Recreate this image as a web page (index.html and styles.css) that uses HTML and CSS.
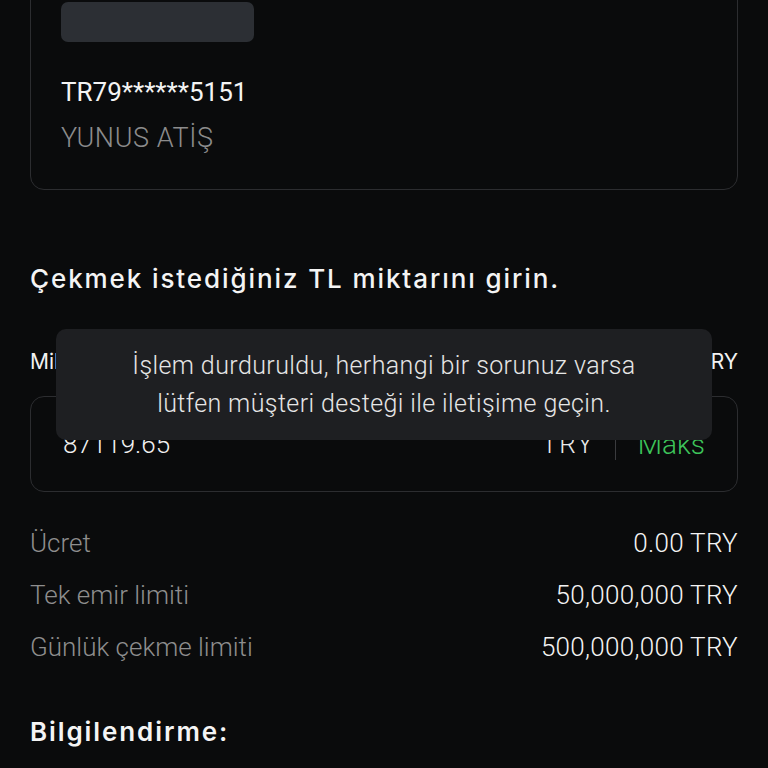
FILE: index.html
```html
<!DOCTYPE html>
<html lang="tr">
<head>
  <meta charset="UTF-8" />
  <meta name="viewport" content="width=device-width, initial-scale=1" />
  <title>TL Çekme</title>
  <link rel="stylesheet" href="styles.css">
</head>
<body>
  <div class="page">
    <div class="bank-card">
      <div class="bank-logo"></div>
      <div class="iban">TR79******5151</div>
      <div class="holder">YUNUS ATİŞ</div>
    </div>

    <h2 class="section-title">Çekmek istediğiniz TL miktarını girin.</h2>

    <div class="amount-head">
      <span class="amount-label">Miktar</span>
      <span class="amount-avail">TRY</span>
    </div>

    <div class="amount-box">
      <span class="amount-value">87119.65</span>
      <span class="amount-unit">TRY</span>
      <span class="divider"></span>
      <span class="max-btn">Maks</span>
    </div>

    <div class="info-rows">
      <div class="info-row"><span class="info-label">Ücret</span><span class="info-value">0.00 TRY</span></div>
      <div class="info-row"><span class="info-label">Tek emir limiti</span><span class="info-value">50,000,000 TRY</span></div>
      <div class="info-row"><span class="info-label">Günlük çekme limiti</span><span class="info-value">500,000,000 TRY</span></div>
    </div>

    <h3 class="notice-title">Bilgilendirme:</h3>
  </div>

  <div class="toast">
    İşlem durduruldu, herhangi bir sorunuz varsa<br>
    lütfen müşteri desteği ile iletişime geçin.
  </div>
</body>
</html>
```

FILE: styles.css
```css
body {
  position: relative;
  margin: 0;
  background-color: #0a0b0c;
  color: #f2f2f2;
  font-family: Roboto, 'Noto Sans', sans-serif;
  overflow: hidden;
}

.page {
  display: flow-root;
  padding: 0 30px;
}

.bank-card {
  margin-top: -20px;
  border: 1px solid #2c2d30;
  border-radius: 14px;
  padding: 21px 30px 34px;
}
.bank-logo {
  width: 193px;
  height: 40px;
  background-color: #2c2f34;
  border-radius: 7px;
}
.iban {
  margin-top: 33px;
  font-size: 26px;
  line-height: 34px;
  color: #f4f4f4;
}
.holder {
  margin-top: 12px;
  font-size: 27px;
  line-height: 34px;
  font-weight: 300;
  letter-spacing: 0.6px;
  color: #8c8c8c;
}

.section-title {
  margin: 72px 0 0;
  font-family: Inter, sans-serif;
  font-size: 26px;
  font-weight: 500;
  letter-spacing: 1.9px;
  line-height: 34px;
  color: #f4f4f4;
}

.amount-head {
  display: flex;
  justify-content: space-between;
  margin-top: 51px;
  font-family: Inter, sans-serif;
  font-size: 21px;
  line-height: 30px;
}

.amount-box {
  display: flex;
  align-items: center;
  height: 94px;
  margin-top: 19px;
  padding: 0 32px;
  border: 1px solid #2c2d30;
  border-radius: 14px;
  font-size: 26px;
  font-weight: 300;
}
.amount-value {
  flex: 1;
  color: #f0f0f0;
}
.amount-unit {
  color: #e8e8e8;
  letter-spacing: 2px;
}
.divider {
  width: 1px;
  height: 32px;
  margin: 0 22px 0 20px;
  background-color: #3a3b3e;
}
.max-btn {
  font-size: 28px;
  color: #3dc45a;
}

.info-rows {
  margin-top: 25px;
}
.info-row {
  display: flex;
  justify-content: space-between;
  height: 52px;
  align-items: center;
  font-size: 26px;
  font-weight: 300;
}
.info-label {
  color: #8e8e8e;
}
.info-value {
  color: #f4f4f4;
  letter-spacing: 0.3px;
}

.notice-title {
  margin: 43px 0 0;
  font-family: Inter, sans-serif;
  font-size: 26px;
  font-weight: 600;
  letter-spacing: 1.9px;
  color: #f4f4f4;
}

.toast {
  position: absolute;
  top: 329px;
  left: 56px;
  width: 656px;
  height: 111px;
  box-sizing: border-box;
  padding-top: 18px;
  background-color: #1e1f22;
  border-radius: 10px;
  text-align: center;
  font-size: 25px;
  font-weight: 300;
  line-height: 38px;
  letter-spacing: 0.4px;
  color: #e6e6e6;
}
```
